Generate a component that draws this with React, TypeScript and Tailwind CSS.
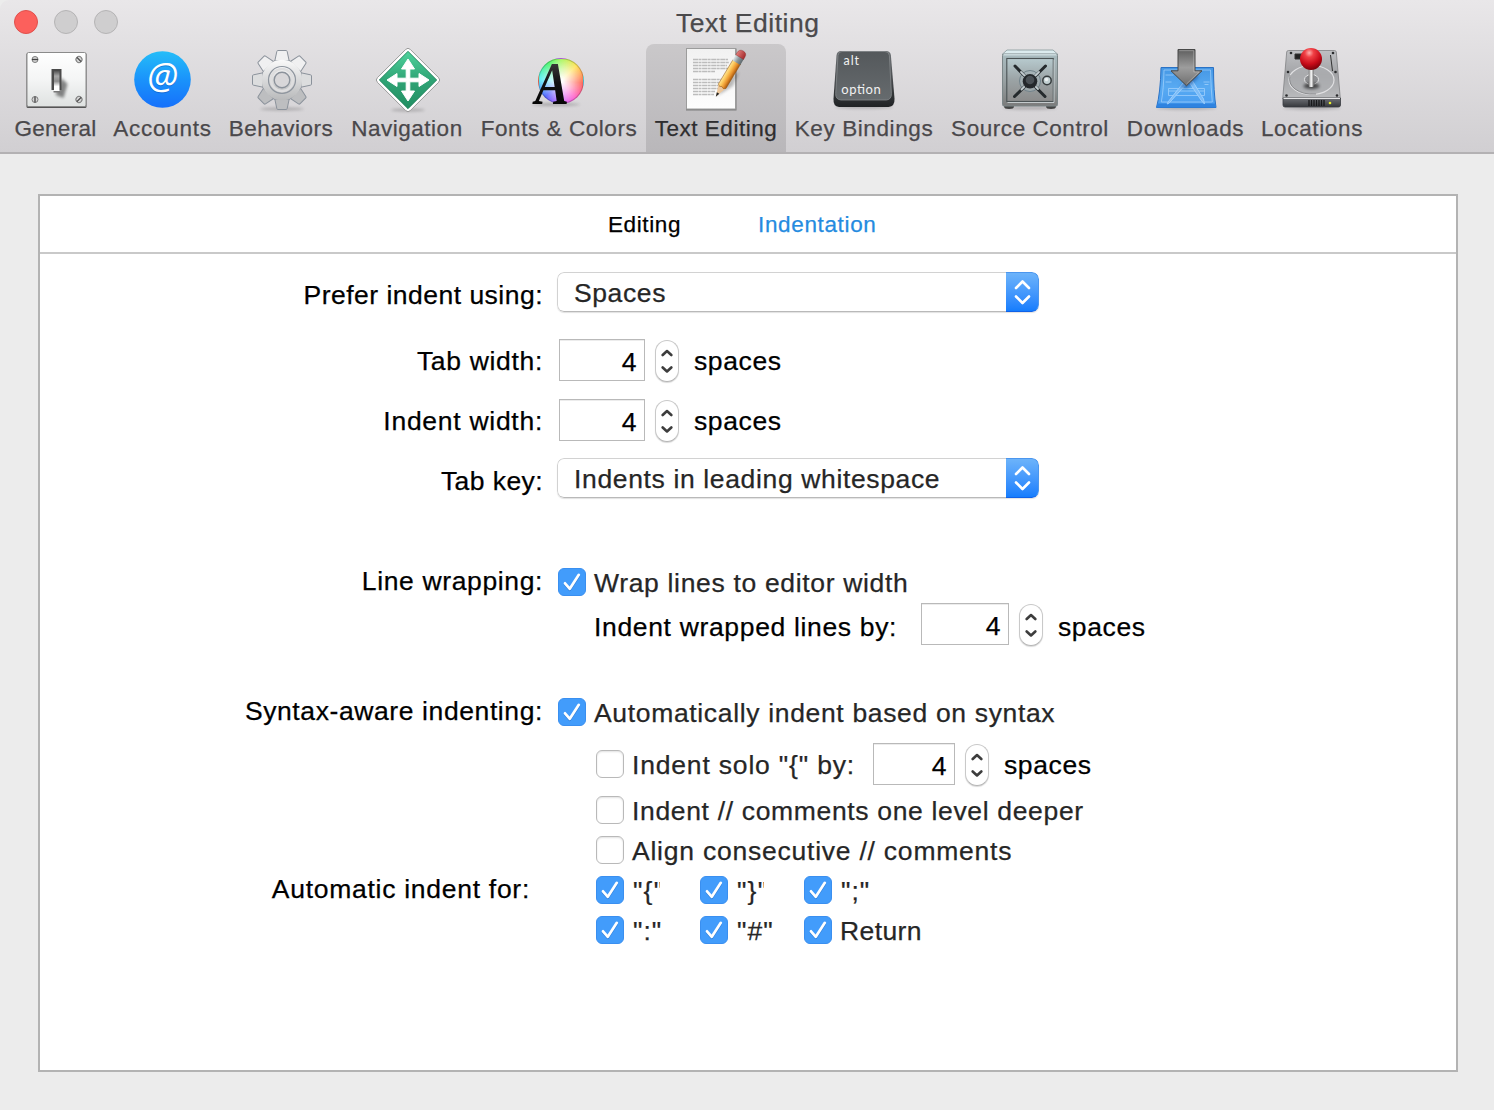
import type { ReactNode } from 'react';

function Icon({ x, children }: { x: number; children: ReactNode }) {
  return (
    <svg width="70" height="68" viewBox={`${x - 35} 46 70 68`} className="block shrink-0 overflow-visible [-webkit-text-stroke:0]">
      {children}
    </svg>
  );
}

function Gradient({ id, stops, x2 = 0, y2 = 1 }: { id: string; stops: string[]; x2?: number; y2?: number }) {
  return (
    <linearGradient id={id} x1="0" y1="0" x2={x2} y2={y2}>
      {stops.map((c, i) => (
        <stop key={i} offset={i / (stops.length - 1)} stopColor={c} />
      ))}
    </linearGradient>
  );
}

function Shadow({ cx, cy, rx }: { cx: number; cy: number; rx: number }) {
  return <ellipse cx={cx} cy={cy} rx={rx} ry="1.5" fill="#000" opacity="0.22" filter="url(#soft)" />;
}

function SharedDefs() {
  return (
    <svg width="0" height="0" className="absolute">
      <defs>
        <filter id="soft" x="-50%" y="-150%" width="200%" height="400%">
          <feGaussianBlur stdDeviation="1.5" />
        </filter>
      </defs>
    </svg>
  );
}

function GeneralIcon() {
  const screws = [
    [34.5, 59.5, 0],
    [78.5, 59.5, 45],
    [34.5, 99.5, 90],
    [78.5, 99.5, -45],
  ];
  return (
    <Icon x={55.5}>
      <defs>
        <Gradient id="plate" stops={['#ffffff', '#f4f5f5', '#dfe2e1']} />
        <Gradient id="toggle" stops={['#555', '#a8a8a8', '#8c8c8c', '#fff', '#fff']} />
      </defs>
      <rect x="26" y="53" width="60" height="55" rx="1.5" fill="#555" />
      <rect x="26.5" y="52.5" width="59" height="54" rx="1.5" fill="url(#plate)" stroke="#8b8b8b" />
      {screws.map(([x, y, a], i) => (
        <g key={i} transform={`rotate(${a} ${x} ${y})`}>
          <circle cx={x} cy={y} r="3" fill="#d5d5d5" stroke="#7d7d7d" />
          <path d={`M${x - 3} ${y}h6`} stroke="#444" strokeWidth="1.3" />
        </g>
      ))}
      <path d="M61 78l6 6-4 14-8-3z" fill="#000" opacity="0.45" filter="url(#soft)" />
      <path d="M51 69h10v21h-10z" fill="#4a4a4a" />
      <rect x="53.5" y="71" width="5.5" height="20.5" fill="url(#toggle)" />
      <rect x="53" y="91" width="6.5" height="1.5" fill="#777" />
    </Icon>
  );
}

function AccountsIcon() {
  return (
    <Icon x={162.5}>
      <defs>
        <Gradient id="accounts" stops={['#25bdf8', '#1a93fb', '#1670fb']} />
      </defs>
      <circle cx="162" cy="79.5" r="28.3" fill="url(#accounts)" />
      <text x="162" y="89.5" textAnchor="middle" fontFamily="Open Sans" fontSize="36" fontStyle="italic" fill="#0b4fb0" opacity="0.5">@</text>
      <text x="162" y="88.5" textAnchor="middle" fontFamily="Open Sans" fontSize="36" fontStyle="italic" fill="#fff">@</text>
    </Icon>
  );
}

function BehaviorsIcon() {
  return (
    <Icon x={281}>
      <defs>
        <Gradient id="gear" stops={['#fafafa', '#d8d9da', '#b9babb']} />
      </defs>
      <Shadow cx={282} cy={109} rx={22} />
      <circle cx="282" cy="80" r="20.5" fill="#c8c9cb" stroke="#8b929b" />
      {[0, 45, 90, 135, 180, 225, 270, 315].map((a) => (
        <path
          key={a}
          d="M274.8 61l2-9.5q.2-1 1-1h8.4q.8 0 1 1l2 9.5z"
          transform={`rotate(${a} 282 80)`}
          fill={a > 90 && a < 270 ? '#bdbec0' : a === 90 || a === 270 ? '#dcddde' : '#f0f0f1'}
          stroke="#8b929b"
          strokeWidth="1"
        />
      ))}
      <circle cx="282" cy="80" r="20.2" fill="url(#gear)" />
      <circle cx="282" cy="80" r="13.5" fill="url(#gear)" stroke="#8e959e" strokeWidth="1.2" />
      <circle cx="282" cy="80" r="11" fill="none" stroke="#dededf" strokeWidth="2.5" />
      <circle cx="282" cy="80" r="7.8" fill="#d8d7d9" stroke="#8b929b" strokeWidth="1.4" />
    </Icon>
  );
}

function NavigationIcon() {
  return (
    <Icon x={407}>
      <defs>
        <Gradient id="sign" stops={['#4fd29c', '#2fa475', '#218e62']} />
      </defs>
      <Shadow cx={408} cy={110} rx={17} />
      <path d="M405.7 49.4q2.3-2.3 4.6 0l28.3 28.3q2.3 2.3 0 4.6l-28.3 28.3q-2.3 2.3-4.6 0l-28.3-28.3q-2.3-2.3 0-4.6z" fill="#fff" stroke="#9b9b9b" />
      <path d="M408 51.3L436.7 80 408 108.7 379.3 80z" fill="url(#sign)" stroke="#177a53" strokeWidth="0.8" />
      <path
        d="M408 59l6.5 10h-4.7v9.2h9.200V73.5l10 6.500-10 6.500v-4.700h-9.200v9.200h4.700L408 101l-6.500-10h4.700v-9.200H397v4.700L387 80l10-6.500v4.700h9.200V69h-4.700z"
        fill="#fff"
        stroke="#fff"
        strokeWidth="1"
        strokeLinejoin="round"
      />
    </Icon>
  );
}

function FontsIcon() {
  return (
    <Icon x={559}>
      <defs>
        <Gradient id="letter" stops={['#555', '#111', '#000']} />
      </defs>
      <Shadow cx={556} cy={104.5} rx={24} />
      <foreignObject x="538" y="58" width="46" height="46">
        <div className="h-[46px] w-[46px] rounded-full border border-black/20 bg-[radial-gradient(circle,#ffffff_5%,#ffffff88_40%,#ffffff00_75%),conic-gradient(#a4f65a,#ffe24e_45deg,#ff6150_95deg,#ff5cc8_140deg,#d765ff_175deg,#4a5bff_225deg,#4df0f4_275deg,#42f566_325deg,#a4f65a)]" />
      </foreignObject>
      <text x="535" y="103.5" fontFamily="Liberation Serif" fontStyle="italic" fontWeight="700" fontSize="61" textLength="34" lengthAdjust="spacingAndGlyphs" fill="url(#letter)">A</text>
    </Icon>
  );
}

function TextEditingIcon() {
  const lines = [59.5, 62.5, 65.5, 68.5, 71.5, 79.5, 82.5, 85.5, 88.5, 91.5, 94.5];
  return (
    <Icon x={716}>
      <defs>
        <Gradient id="paper" stops={['#f1f1f1', '#fdfdfd']} />
        <Gradient id="wood" stops={['#ffe796', '#fcc558', '#e8922c', '#a4570f']} x2={1} y2={0} />
        <Gradient id="ferrule" stops={['#e3eaec', '#8a979c', '#5e686c']} x2={1} y2={0} />
        <Gradient id="rubber" stops={['#e07b78', '#a52a2c']} x2={1} y2={0} />
      </defs>
      <rect x="686" y="48.5" width="50.5" height="62" fill="#7d7d7d" />
      <rect x="686.5" y="48.5" width="49" height="60.5" fill="url(#paper)" stroke="#9c9c9c" />
      {lines.map((y, i) => (
        <path key={y} d={`M693 ${y}H${[728, 729, 727, 729, 715, 729, 728, 718, 719, 715, 714][i]}`} stroke="#bcbcbc" strokeWidth="1.3" strokeDasharray="5 .5 3 .6" />
      ))}
      <path d="M717 96l16-10 6-14-10 6z" fill="#000" opacity="0.25" filter="url(#soft)" />
      <g transform="rotate(31 716 96.5)">
        <path d="M711.6 84l4.4 12.500 4.400-12.500z" fill="#edc79b" />
        <path d="M714.6 92.500l1.400 4.300 1.400-4.300z" fill="#222" />
        <path d="M711.6 84.500V56h8.800v28.500l-2.200 1.500-2.200-1-2.200 1z" fill="url(#wood)" stroke="#955717" strokeWidth="0.5" />
        <rect x="711.4" y="50" width="9.2" height="7" fill="url(#ferrule)" />
        <path d="M711.5 50.500v-2.500q0-4.500 4.500-4.500t4.500 4.500v2.500z" fill="url(#rubber)" stroke="#8a2a2c" strokeWidth="0.4" />
      </g>
    </Icon>
  );
}

function KeyIcon() {
  return (
    <Icon x={864}>
      <defs>
        <Gradient id="keyTop" stops={['#54585b', '#666b6e']} />
        <Gradient id="keySide" stops={['#6d7174', '#4a4d50', '#202224']} />
      </defs>
      <Shadow cx={864} cy={107} rx={29} />
      <path d="M841 51h45q4.5 0 4.9 4.5l3.6 43q.5 8-6 8.5h-49.5q-6-.5-5.500-8.500l3-43q.4-4.500 4.500-4.500z" fill="url(#keySide)" />
      <path d="M842 51.5h43q4 0 4.400 4l2 38q.2 6-5 6.500h-45.400q-5.600-.5-5.300-6.500l2.300-38q.3-4 4-4z" fill="url(#keyTop)" stroke="#85898c" strokeWidth="0.8" />
      <text x="843.5" y="65.3" fontFamily="Lato" fontSize="12.5" textLength="15.5" fill="#f1f1f1">alt</text>
      <text x="841.3" y="94" fontFamily="Lato" fontSize="13" textLength="39.5" fill="#f1f1f1">option</text>
    </Icon>
  );
}

function SafeIcon() {
  return (
    <Icon x={1030}>
      <defs>
        <Gradient id="safe" stops={['#a9bcc0', '#99a2a4', '#7b7b7b']} />
        <Gradient id="safeDoor" stops={['#b7cace', '#9ba3a5', '#8b8b8b']} />
      </defs>
      <Shadow cx={1030} cy={108} rx={27} />
      <ellipse cx="1009" cy="106.5" rx="5" ry="2.5" fill="#444" />
      <ellipse cx="1051" cy="106.5" rx="5" ry="2.5" fill="#444" />
      <path d="M1007 50h46l5 4.5h-56z" fill="#dcecef" stroke="#87979a" strokeWidth="0.8" />
      <rect x="1002.5" y="54" width="55" height="52" rx="1.5" fill="url(#safe)" stroke="#7c8789" />
      <path d="M1003.5 54.8h53" stroke="#e1eff2" />
      <rect x="1006.8" y="58.5" width="46.5" height="43" fill="url(#safeDoor)" stroke="#4b5355" strokeWidth="1.1" />
      <path d="M1007.5 102.500h46.500v-43" fill="none" stroke="#d5dddf" strokeWidth="0.8" />
      <circle cx="1030" cy="81" r="10.5" fill="#a7b4b9" fillOpacity=".6" stroke="#71828b" />
      <g strokeLinecap="round">
        <path d="M1015 66l30 30.500M1045.500 66l-31 30.500" stroke="#252a2d" strokeWidth="3" />
        <path d="M1021 72l17 17M1039 72l-17.500 17.500" stroke="#c4ced2" strokeWidth="1.8" />
      </g>
      <circle cx="1030" cy="81.3" r="7.3" fill="#24282c" />
      <circle cx="1030" cy="80" r="4.3" fill="#4a5056" />
      <circle cx="1047" cy="80.5" r="4.2" fill="#c2d0d2" stroke="#353b3d" strokeWidth="1.5" />
      <circle cx="1046.5" cy="79.5" r="1.7" fill="#fff" opacity=".7" />
    </Icon>
  );
}

function DownloadsIcon() {
  return (
    <Icon x={1185.5}>
      <defs>
        <Gradient id="blueprint" stops={['#4597e4', '#58aaf2', '#489cf0']} />
        <Gradient id="arrow" stops={['#5e5e5e', '#9d9d9d', '#6e6e6e']} />
      </defs>
      <Shadow cx={1186} cy={108} rx={30} />
      <path d="M1160.5 67.500h52.500q0 24 2.500 40h-59.500q4-15 4.500-40z" fill="url(#blueprint)" stroke="#2b72c5" />
      <path d="M1156 107.500h59.500l-.7-4h-57.800z" fill="#2f83e0" />
      <g fill="none" stroke="#b6dcff" strokeWidth="0.8" opacity=".75">
        <path d="M1163.5 70h46.500q.5 19 1.800 32h-51q2.400-13 2.700-32zM1168 88.500h36v7h-36zM1168 91h36M1165 75h8M1165 82h6M1203 82h6M1204 84.500h4" />
        <path d="M1182.500 83l-15 19-.8 2 2-1 17-19M1188.500 82l12 18 3.500 4-1-5-11-18" fill="#8ac4fb" strokeWidth="1" />
      </g>
      <path d="M1179 87l7.500 2 12-12-5-4z" fill="#124b94" opacity=".5" filter="url(#soft)" />
      <path d="M1177.5 49.500h17v21.300h7l-15.500 15-15.500-15h7z" fill="url(#arrow)" stroke="#484848" />
      <path d="M1178.7 50.700h14.600v21.300h5.300L1186 84" fill="none" stroke="#bbb" strokeWidth=".8" opacity=".7" />
    </Icon>
  );
}

function LocationsIcon() {
  return (
    <Icon x={1312}>
      <defs>
        <Gradient id="drive" stops={['#bfc0c3', '#a2a3a6', '#babbbd']} />
        <Gradient id="front" stops={['#6e7075', '#36383c']} />
        <Gradient id="stick" stops={['#777', '#fff', '#777']} x2={1} y2={0} />
        <radialGradient id="ball" cx=".42" cy=".22" r=".8">
          <stop offset="0" stopColor="#ffb0ae" />
          <stop offset=".25" stopColor="#f04045" />
          <stop offset=".65" stopColor="#c80b19" />
          <stop offset="1" stopColor="#750009" />
        </radialGradient>
      </defs>
      <Shadow cx={1312} cy={108} rx={29} />
      <path d="M1288.5 50.500h46q1.500 0 1.800 1.500l4 46.500h-57.600l4-46.500q.2-1.500 1.800-1.500z" fill="url(#drive)" stroke="#808184" strokeWidth=".8" />
      <path d="M1283 98h57.500v7q0 2-2 2h-53.500q-2 0-2-2z" fill="url(#front)" stroke="#393b40" strokeWidth=".8" />
      <path d="M1283.5 98.500h56.500" stroke="#e4e4e5" />
      <ellipse cx="1311.5" cy="80" rx="22.5" ry="14.5" fill="#adaeb1" fillOpacity=".7" stroke="#e0e0e2" strokeWidth="1.2" />
      <path d="M1290 75q-2 9 5 14 8 6 21 5" fill="none" stroke="#7c7d80" strokeWidth=".8" />
      <ellipse cx="1311.5" cy="79.5" rx="7" ry="5" fill="#8d8e91" stroke="#e5e5e6" />
      <ellipse cx="1311.5" cy="86" rx="8" ry="3" fill="#000" opacity=".6" filter="url(#soft)" />
      <path d="M1295 54h8v5h-8zM1330.500 55l2 16" fill="#222" stroke="#333" />
      {[[1291, 53], [1333, 53], [1288, 72], [1335.5, 72], [1286.5, 95.5], [1337, 95.5]].map(([x, y], i) => (
        <circle key={i} cx={x} cy={y} r="1.3" fill="#2b2c2e" />
      ))}
      <path d="M1309 100v6m2.500-6v6m2.500-6v6m2.500-6v6m2.500-6v6m2.500-6v6m2.500-6v6" stroke="#17181a" strokeWidth="1.3" />
      <circle cx="1330" cy="103" r="1.3" fill="#e8ef2b" />
      <rect x="1308.7" y="66" width="5" height="21" rx="1" fill="url(#stick)" />
      <circle cx="1311" cy="59" r="11" fill="url(#ball)" />
    </Icon>
  );
}

const tools = [
  { label: 'General', w: 'w-[99px]', t: 'tracking-[0.25px]', icon: <GeneralIcon /> },
  { label: 'Accounts', w: 'w-[115px]', t: 'tracking-[0.75px]', icon: <AccountsIcon /> },
  { label: 'Behaviors', w: 'w-[122px]', t: 'tracking-[0.5px]', icon: <BehaviorsIcon /> },
  { label: 'Navigation', w: 'w-[130px]', t: 'tracking-[0.5px]', icon: <NavigationIcon /> },
  { label: 'Fonts & Colors', w: 'w-[174px]', t: 'tracking-[0.55px]', icon: <FontsIcon /> },
  { label: 'Text Editing', w: 'w-[140px]', t: 'tracking-[0.5px]', icon: <TextEditingIcon />, active: true },
  { label: 'Key Bindings', w: 'w-[156px]', t: 'tracking-[0.6px]', icon: <KeyIcon /> },
  { label: 'Source Control', w: 'w-[176px]', t: 'tracking-[0.55px]', icon: <SafeIcon /> },
  { label: 'Downloads', w: 'w-[135px]', t: 'tracking-[0.7px]', icon: <DownloadsIcon /> },
  { label: 'Locations', w: 'w-[118px]', t: 'tracking-[0.65px]', icon: <LocationsIcon /> },
];

function Label({ children, className = '' }: { children: ReactNode; className?: string }) {
  return <div className={`mr-[14px] w-[503px] shrink-0 text-right ${className}`}>{children}</div>;
}

function Select({ children, className = '' }: { children: ReactNode; className?: string }) {
  return (
    <div className="flex h-10 w-[482px] overflow-hidden rounded-[7px] shadow-[0_1px_1px_rgba(0,0,0,0.12)]">
      <div className={`flex flex-1 items-center rounded-l-[7px] border border-r-0 border-[#d2d2d2] border-b-[#b9b9b9] bg-white pt-[2px] pl-4 text-[#262626] ${className}`}>
        {children}
      </div>
      <div className="flex w-[33px] items-center justify-center rounded-r-[7px] border border-l-0 border-[#4b96ee] border-b-[#1062e8] bg-linear-to-b from-[#6cb3fa] to-[#147dfd]">
        <svg width="17" height="26" viewBox="0 0 17 26" fill="none" stroke="#fff" strokeWidth="2.6" strokeLinecap="round" strokeLinejoin="round">
          <path d="M2 9l6.500-6.500L15 9M2 17.500L8.500 24l6.500-6.500" />
        </svg>
      </div>
    </div>
  );
}

function NumberField({ w }: { w: string }) {
  return (
    <>
      <div className={`h-[42px] shrink-0 border border-[#b9b9b9] bg-white pt-[8px] pr-[7px] text-right leading-[28px] shadow-[inset_0_1px_0_#ececec] ${w}`}>4</div>
      <div className="mt-[2px] ml-[10px] flex h-[42px] w-6 shrink-0 items-center justify-center rounded-full border border-[#c9c9c9] border-b-[#b5b5b5] bg-white shadow-[0_1px_1px_rgba(0,0,0,0.15)]">
        <svg width="12" height="26" viewBox="0 0 12 26" fill="none" stroke="#3d3d3d" strokeWidth="2.6" strokeLinecap="round" strokeLinejoin="round">
          <path d="M1.7 7L6 3l4.300 4M1.700 19.500L6 23.500l4.300-4" />
        </svg>
      </div>
    </>
  );
}

function Check({ on = false }: { on?: boolean }) {
  return on ? (
    <div className="flex h-7 w-7 shrink-0 items-center justify-center rounded-[6px] border border-[#3a8ff0] bg-[#429cfb]">
      <svg width="20" height="20" viewBox="0 0 20 20" fill="none" strokeLinecap="round" strokeLinejoin="round">
        <path d="M3 12.500l4.800 5.300L16.800 4" stroke="#2d7dd8" strokeWidth="2.5" />
        <path d="M3 11.300l4.800 5.500L16.800 2.800" stroke="#fff" strokeWidth="2.7" />
      </svg>
    </div>
  ) : (
    <div className="h-7 w-7 shrink-0 rounded-[6px] border border-[#b9b9b9] bg-white shadow-[inset_0_1px_2px_rgba(0,0,0,0.12)]" />
  );
}

function CheckItem({ children, on, w = '', t = '' }: { children: ReactNode; on?: boolean; w?: string; t?: string }) {
  return (
    <div className={`flex items-center ${w}`}>
      <Check on={on} />
      <span className={`mt-[2px] ml-2 text-[#262626] ${t}`}>{children}</span>
    </div>
  );
}

export default function App() {
  return (
    <div className="flex h-[1110px] w-[1494px] flex-col overflow-hidden bg-[#ececec] font-['Liberation_Sans',Arial,sans-serif] text-[26.5px] leading-[28px] whitespace-nowrap text-black [-webkit-text-stroke:0.25px]">
      <SharedDefs />
      <header className="h-[154px] shrink-0 rounded-tl-[9px] border-b-2 border-[#b3b1b3] bg-linear-to-b from-[#e9e7e9] to-[#d1cfd2]">
        <div className="flex h-11 items-center pl-[14px]">
          <div className="flex w-[646px] gap-4">
            <i className="h-6 w-6 rounded-full border border-[#e0504c] bg-[#fc605c]" />
            <i className="h-6 w-6 rounded-full border border-[#b5b4b5] bg-[#cfcecf]" />
            <i className="h-6 w-6 rounded-full border border-[#b5b4b5] bg-[#cfcecf]" />
          </div>
          <h1 className="mt-px ml-4 tracking-[0.55px] text-[#4b4a4c]">Text Editing</h1>
        </div>
        <nav className="flex h-[108px] pl-[6px]">
          {tools.map((tool) => (
            <div
              key={tool.label}
              className={`flex shrink-0 flex-col items-center rounded-t-[8px] pt-[2px] ${tool.w} ${tool.active ? 'bg-linear-to-b from-[#cac8ca] to-[#b9b7ba] text-[#2e2d2f]' : 'text-[#4a484b]'}`}
            >
              {tool.icon}
              <span className={`mt-px text-[22.5px] leading-[28px] ${tool.t}`}>{tool.label}</span>
            </div>
          ))}
        </nav>
      </header>

      <main className="mt-10 ml-[38px] flex h-[878px] w-[1420px] flex-col border-2 border-[#b3b3b3] bg-white tracking-[0.6px]">
        <div className="flex h-[58px] shrink-0 items-center border-b-2 border-[#c9c9c9] pl-[568px] text-[22.5px]">
          <span className="mt-px w-[150px]">Editing</span>
          <span className="mt-px tracking-[0.65px] text-[#258be0]">Indentation</span>
        </div>

        <div className="mt-[18px] flex h-10 items-center">
          <Label className="mt-[5px] tracking-[0.48px]">Prefer indent using:</Label>
          <Select>Spaces</Select>
        </div>
        <div className="mt-[27px] flex h-[42px] items-center">
          <Label className="mt-[2px] tracking-[0.68px]">Tab width:</Label>
          <div className="flex items-center pl-[2px]">
            <NumberField w="w-[86px]" />
            <span className="mt-[2px] ml-[15px]">spaces</span>
          </div>
        </div>
        <div className="mt-[18px] flex h-[42px] items-center">
          <Label className="mt-[2px] tracking-[0.72px]">Indent width:</Label>
          <div className="flex items-center pl-[2px]">
            <NumberField w="w-[86px]" />
            <span className="mt-[2px] ml-[15px]">spaces</span>
          </div>
        </div>
        <div className="mt-[17px] flex h-10 items-center">
          <Label className="mt-[5px] tracking-[0.42px]">Tab key:</Label>
          <Select className="tracking-[0.64px]">Indents in leading whitespace</Select>
        </div>

        <div className="mt-[70px] flex h-7 items-center">
          <Label className="-mt-[2px] tracking-[0.63px]">Line wrapping:</Label>
          <div className="pl-px">
            <CheckItem on t="tracking-[0.67px]">Wrap lines to editor width</CheckItem>
          </div>
        </div>
        <div className="mt-[7px] flex h-[42px] items-center pl-[554px]">
          <span className="mt-[5px] w-[327px] tracking-[0.66px]">Indent wrapped lines by:</span>
          <NumberField w="w-[88px]" />
          <span className="mt-[5px] ml-[15px]">spaces</span>
        </div>

        <div className="mt-[53px] flex h-7 items-center">
          <Label className="-mt-[2px]">Syntax-aware indenting:</Label>
          <div className="pl-px">
            <CheckItem on t="tracking-[0.66px]">Automatically indent based on syntax</CheckItem>
          </div>
        </div>
        <div className="mt-[17px] flex h-[42px] items-center pl-[556px]">
          <CheckItem w="w-[277px]" t="tracking-[0.82px]">Indent solo "{'{'}" by:</CheckItem>
          <NumberField w="w-[82px]" />
          <span className="mt-[2px] ml-[15px]">spaces</span>
        </div>
        <div className="mt-[11px] flex h-7 items-center pl-[556px]">
          <CheckItem t="tracking-[0.66px]">Indent // comments one level deeper</CheckItem>
        </div>
        <div className="mt-3 flex h-7 items-center pl-[556px]">
          <CheckItem t="tracking-[0.77px]">Align consecutive // comments</CheckItem>
        </div>
        <div className="mt-3 flex h-7 items-center">
          <div className="-mt-[2px] w-[490px] text-right tracking-[0.72px]">Automatic indent for:</div>
          <div className="flex pl-[66px]">
            <CheckItem on w="w-[104px]" t="tracking-[1.2px]">
              <span className="block w-[28px] overflow-hidden pl-px">"{'{'}"</span>
            </CheckItem>
            <CheckItem on w="w-[104px]" t="tracking-[1.2px]">
              <span className="block w-[28px] overflow-hidden pl-px">"{'}'}"</span>
            </CheckItem>
            <CheckItem on t="pl-px tracking-[1px]">";"</CheckItem>
          </div>
        </div>
        <div className="mt-3 flex h-7 items-center pl-[556px]">
          <CheckItem on w="w-[104px]" t="pl-px tracking-[1px]">":"</CheckItem>
          <CheckItem on w="w-[104px]" t="pl-px tracking-[1px]">"#"</CheckItem>
          <CheckItem on t="tracking-[0.4px]">Return</CheckItem>
        </div>
      </main>
    </div>
  );
}
